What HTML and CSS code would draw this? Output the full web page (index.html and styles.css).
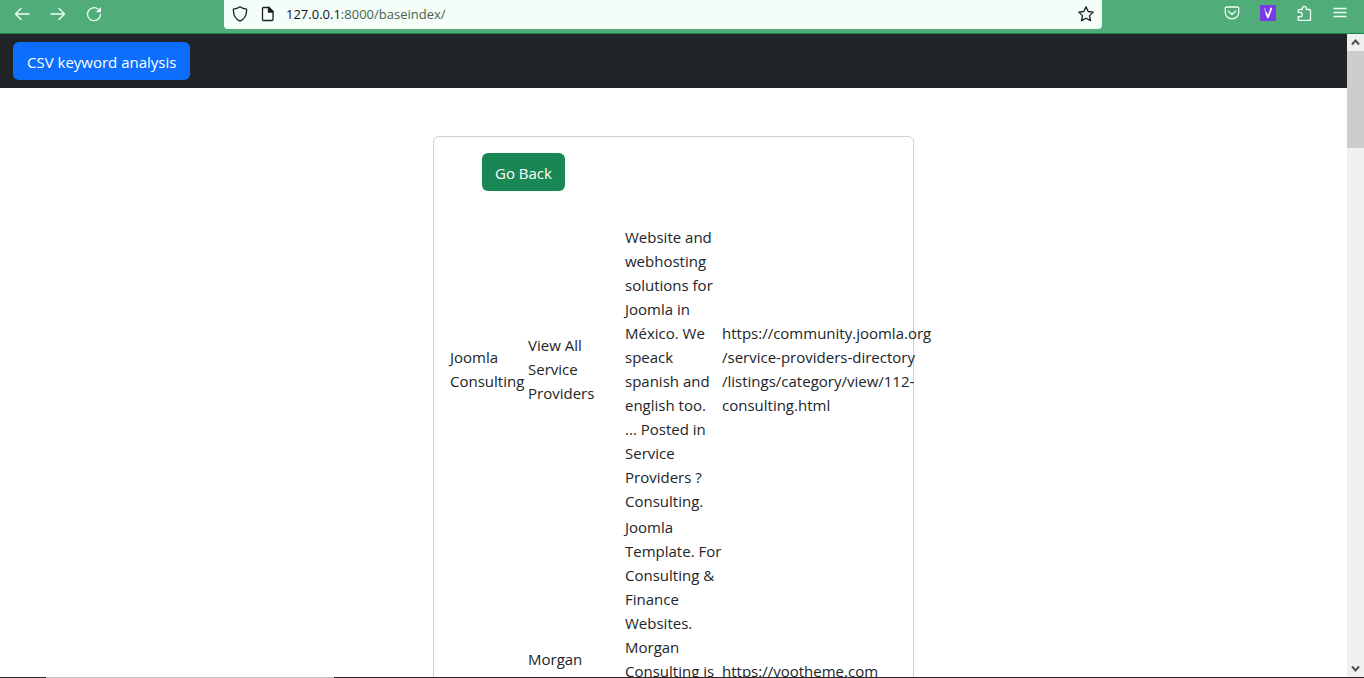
FILE: index.html
```html
<!DOCTYPE html>
<html lang="en">
<head>
<meta charset="utf-8">
<title>CSV keyword analysis</title>
<link rel="stylesheet" href="styles.css">
</head>
<body>
<header class="toolbar">
  <div class="nav-buttons">
    <button class="tool" aria-label="Back"><svg viewBox="0 0 16 16"><path d="M15 8H1.500M7 2.500 1.500 8 7 13.500"/></svg></button>
    <button class="tool" aria-label="Forward"><svg viewBox="0 0 16 16"><path d="M1 8h13.500M9 2.500 14.500 8 9 13.500"/></svg></button>
    <button class="tool" aria-label="Reload"><svg viewBox="0 0 16 16"><path d="M12.200 3.200A6.500 6.500 0 1 0 14.500 8.500"/><path class="arrow" d="M15 1v5.200H9.800z"/></svg></button>
  </div>
  <div class="address">
    <svg class="dark" viewBox="0 0 16 16"><path d="M8 .8c2 1.500 4.200 2.200 6.600 2.400.3 5.600-1.600 9.600-6.600 12C3 12.800 1.100 8.800 1.400 3.200 3.800 3 6 2.300 8 .8z"/></svg>
    <svg class="dark page-icon" viewBox="0 0 16 16"><path d="M3.500 1.500H9l4 4v8a1 1 0 0 1-1 1H3.500a1 1 0 0 1-1-1v-11a1 1 0 0 1 1-1z"/><path class="solid" d="M8.500 1.200 13.300 6H8.500z"/></svg>
    <div class="url"><span class="host">127.0.0.1</span>:8000/baseindex/</div>
    <button class="tool star" aria-label="Bookmark this page"><svg class="dark" viewBox="0 0 16 16"><path d="m8 .9 2.200 4.600 5 .6-3.700 3.500 1 5L8 12.200l-4.500 2.400 1-5L.8 6.100l5-.6z"/></svg></button>
  </div>
  <div class="extensions">
    <button class="tool" aria-label="Save to Pocket"><svg viewBox="0 0 16 16"><path d="M2.500 2h11a1.200 1.200 0 0 1 1.200 1.200v4a6.700 6.700 0 0 1-13.400 0v-4A1.200 1.200 0 0 1 2.500 2z"/><path d="M4.500 6.200 8 9.500l3.500-3.300"/></svg></button>
    <button class="tool" aria-label="V extension"><svg viewBox="0 0 16 16"><path class="badge" d="M0 0h16v16H0z"/><path class="faint" d="M4.500 3.500 7.500 12"/><path class="vee" d="M6.200 8 8 12.300 11.200 3.500"/></svg></button>
    <button class="tool" aria-label="Extensions"><svg viewBox="0 0 16 16"><path d="M2.200 7V5.500a1 1 0 0 1 1-1h3.200V3a2 2 0 0 1 3.900 0v1.500h3.200a1 1 0 0 1 1 1V15a.5.500 0 0 1-.5.500H2.700a.5.500 0 0 1-.5-.5v-3.300h1.900a2.200 2.200 0 0 0 0-4.400H2.200z"/></svg></button>
    <button class="tool" aria-label="Menu"><svg viewBox="0 0 16 16"><path d="M2 3.500h12M2 7.500h12M2 11.500h12"/></svg></button>
  </div>
</header>
<div class="window">
  <div class="content">
    <nav class="navbar"><a class="btn primary" href="#">CSV keyword analysis</a></nav>
    <main class="card">
      <a class="btn success" href="#">Go Back</a>
      <table class="results">
        <colgroup><col class="c-name"><col class="c-title"><col class="c-text"><col class="c-link"></colgroup>
        <tbody>
        <tr>
          <td>Joomla<br>Consulting</td>
          <td>View All<br>Service<br>Providers</td>
          <td>Website and<br>webhosting<br>solutions for<br>Joomla in<br>México. We<br>speack<br>spanish and<br>english too.<br>... Posted in<br>Service<br>Providers ?<br>Consulting.</td>
          <td>https://community.joomla.org<br>/service-providers-directory<br>/listings/category/view/112-<br>consulting.html</td>
        </tr>
        <tr>
          <td></td>
          <td><div class="lines-3">Morgan</div></td>
          <td><div class="lines-14">Joomla<br>Template. For<br>Consulting &amp;<br>Finance<br>Websites.<br>Morgan<br>Consulting is</div></td>
          <td><div class="lines-2">https://yootheme.com</div></td>
        </tr>
        </tbody>
      </table>
    </main>
  </div>
  <div class="scrollbar">
    <svg viewBox="0 0 17 17"><path d="m5 10.500 3.500-4 3.500 4"/></svg>
    <div class="track"><div class="thumb"></div></div>
    <svg viewBox="0 0 17 17"><path d="m5 6.500 3.500 4 3.500-4"/></svg>
  </div>
</div>
<div class="taskbar-edge"></div>
</body>
</html>
```
FILE: styles.css
```css
* { box-sizing: border-box; }
body {
  margin: 0;
  height: 100vh;
  display: flex;
  flex-direction: column;
  overflow: hidden;
  background: #fff;
  color: #212529;
  font: 15px/24px "Open Sans", "Noto Sans", sans-serif;
}
svg { display: block; width: 16px; height: 16px; fill: none; stroke: #eefff5; stroke-width: 1.3; stroke-linecap: round; stroke-linejoin: round; }
.dark { stroke: #1b221f; }
.solid { fill: #eefff5; }
.dark .solid { fill: #1b221f; }
.arrow { fill: #eefff5; stroke: none; }
.badge { fill: #7b3be4; stroke: none; }
.faint { stroke: #b795f2; }
.vee { stroke: #fff; stroke-width: 1.8; }

.toolbar {
  flex: none;
  display: grid;
  grid-template-columns: 224px 1fr 262px;
  height: 34px;
  background: #50ad79;
  border-bottom: 1px solid #198449;
}
.tool { padding: 0; border: 0; background: none; }
.nav-buttons { display: flex; align-items: flex-start; gap: 20px; padding: 6px 0 0 14px; }
.extensions { display: flex; align-items: flex-start; justify-content: flex-end; gap: 20px; padding: 5px 16px 0 0; }
.address {
  display: flex;
  align-items: center;
  height: 29px;
  padding: 0 8px 2px;
  background: #f4fdf8;
  border-radius: 0 0 4px 4px;
}
.page-icon { margin-left: 12px; }
.url { margin-left: 10px; flex: 1; font-size: 13px; color: #47634f; }
.host { color: #15141a; }

.window { flex: 1; min-height: 0; display: flex; }
.content { flex: 1; min-width: 0; overflow: hidden; }
.navbar { display: flex; padding: 8px 13px; background: #212529; }
.btn {
  display: inline-block;
  padding: 8px 13px 6px;
  border-radius: 6px;
  color: #fff;
  text-decoration: none;
  white-space: nowrap;
}
.primary { padding-inline: 14px; background: #0d6efd; }
.success { margin-left: 32px; background: #198754; }
.card {
  max-width: 481px;
  margin: 48px auto;
  padding: 16px;
  border: 1px solid #ced0d2;
  border-radius: 6px;
}
.results { margin-top: 33px; width: 484px; table-layout: fixed; border-collapse: collapse; }
.results td { padding: 1px 0; vertical-align: middle; white-space: nowrap; }
.c-name { width: 78px; }
.c-title { width: 97px; }
.c-text { width: 97px; }
.c-link { width: 212px; }
.lines-2 { min-height: 48px; }
.lines-3 { min-height: 72px; }
.lines-14 { min-height: 336px; }

.scrollbar { flex: none; display: flex; flex-direction: column; width: 17px; background: #f0f0f0; }
.scrollbar svg { width: 17px; height: 17px; stroke: #505050; stroke-width: 2; stroke-linecap: butt; stroke-linejoin: miter; }
.track { flex: 1; }
.thumb { height: 97px; background: #cdcdcd; }
.taskbar-edge {
  flex: none;
  height: 1px;
  background: linear-gradient(90deg, #2c2b28 46px, #c2c2c2 46px 334px, #2f2625 334px);
}
```
